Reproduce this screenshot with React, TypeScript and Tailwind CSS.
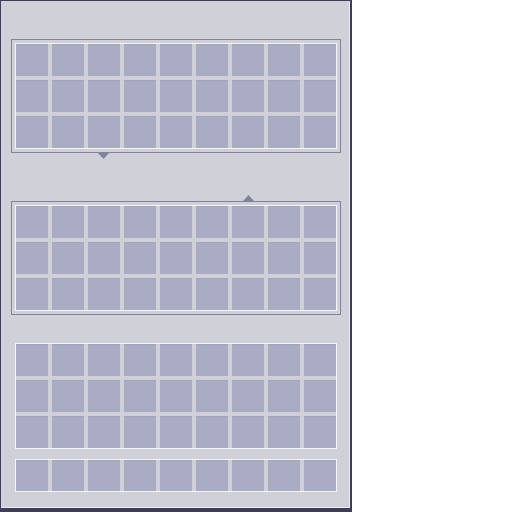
import React from "react";

const Cell = ({ h = 32 }: { h?: number }) => (
  <div className="w-[32px] bg-[#aaacc4] border-t border-[#a2a4bc]" style={{ height: h }} />
);

const Grid = ({ rows, h = 32 }: { rows: number; h?: number }) => (
  <div className="border border-[#f4f4f8] bg-[#cfd0d8]">
    <div className="grid grid-cols-[repeat(9,32px)] gap-[4px]">
      {Array.from({ length: rows * 9 }).map((_, i) => (
        <Cell key={i} h={h} />
      ))}
    </div>
  </div>
);

const Group = ({ rows, framed, h }: { rows: number; framed: boolean; h?: number }) => (
  <div
    className={
      framed
        ? "w-[330px] border border-[#80849a] p-[3px]"
        : "w-[330px] border border-transparent p-[3px]"
    }
  >
    <Grid rows={rows} h={h} />
  </div>
);

export default function App() {
  return (
    <div className="w-[352px] h-[512px] bg-[#3e3e56] pl-px pt-px pr-[2px] pb-[4px] flex">
      <div className="flex-1 bg-[#cfd0d8] border-r border-b border-[#ececf2] pl-[10px] pt-[38px] flex flex-col">
        <Group rows={3} framed />
        <div className="h-[6px] pl-[87px]">
          <svg width="11" height="6" viewBox="0 0 11 6" className="block">
            <polygon points="0,0 11,0 5.5,6" fill="#80849a" />
          </svg>
        </div>
        <div className="h-[6px] mt-[36px] pl-[232px]">
          <svg width="11" height="6" viewBox="0 0 11 6" className="block">
            <polygon points="0,6 11,6 5.5,0" fill="#80849a" />
          </svg>
        </div>
        <Group rows={3} framed />
        <div className="mt-[24px]">
          <Group rows={3} framed={false} />
        </div>
        <div className="mt-[2px]">
          <Group rows={1} framed={false} h={31} />
        </div>
      </div>
    </div>
  );
}
